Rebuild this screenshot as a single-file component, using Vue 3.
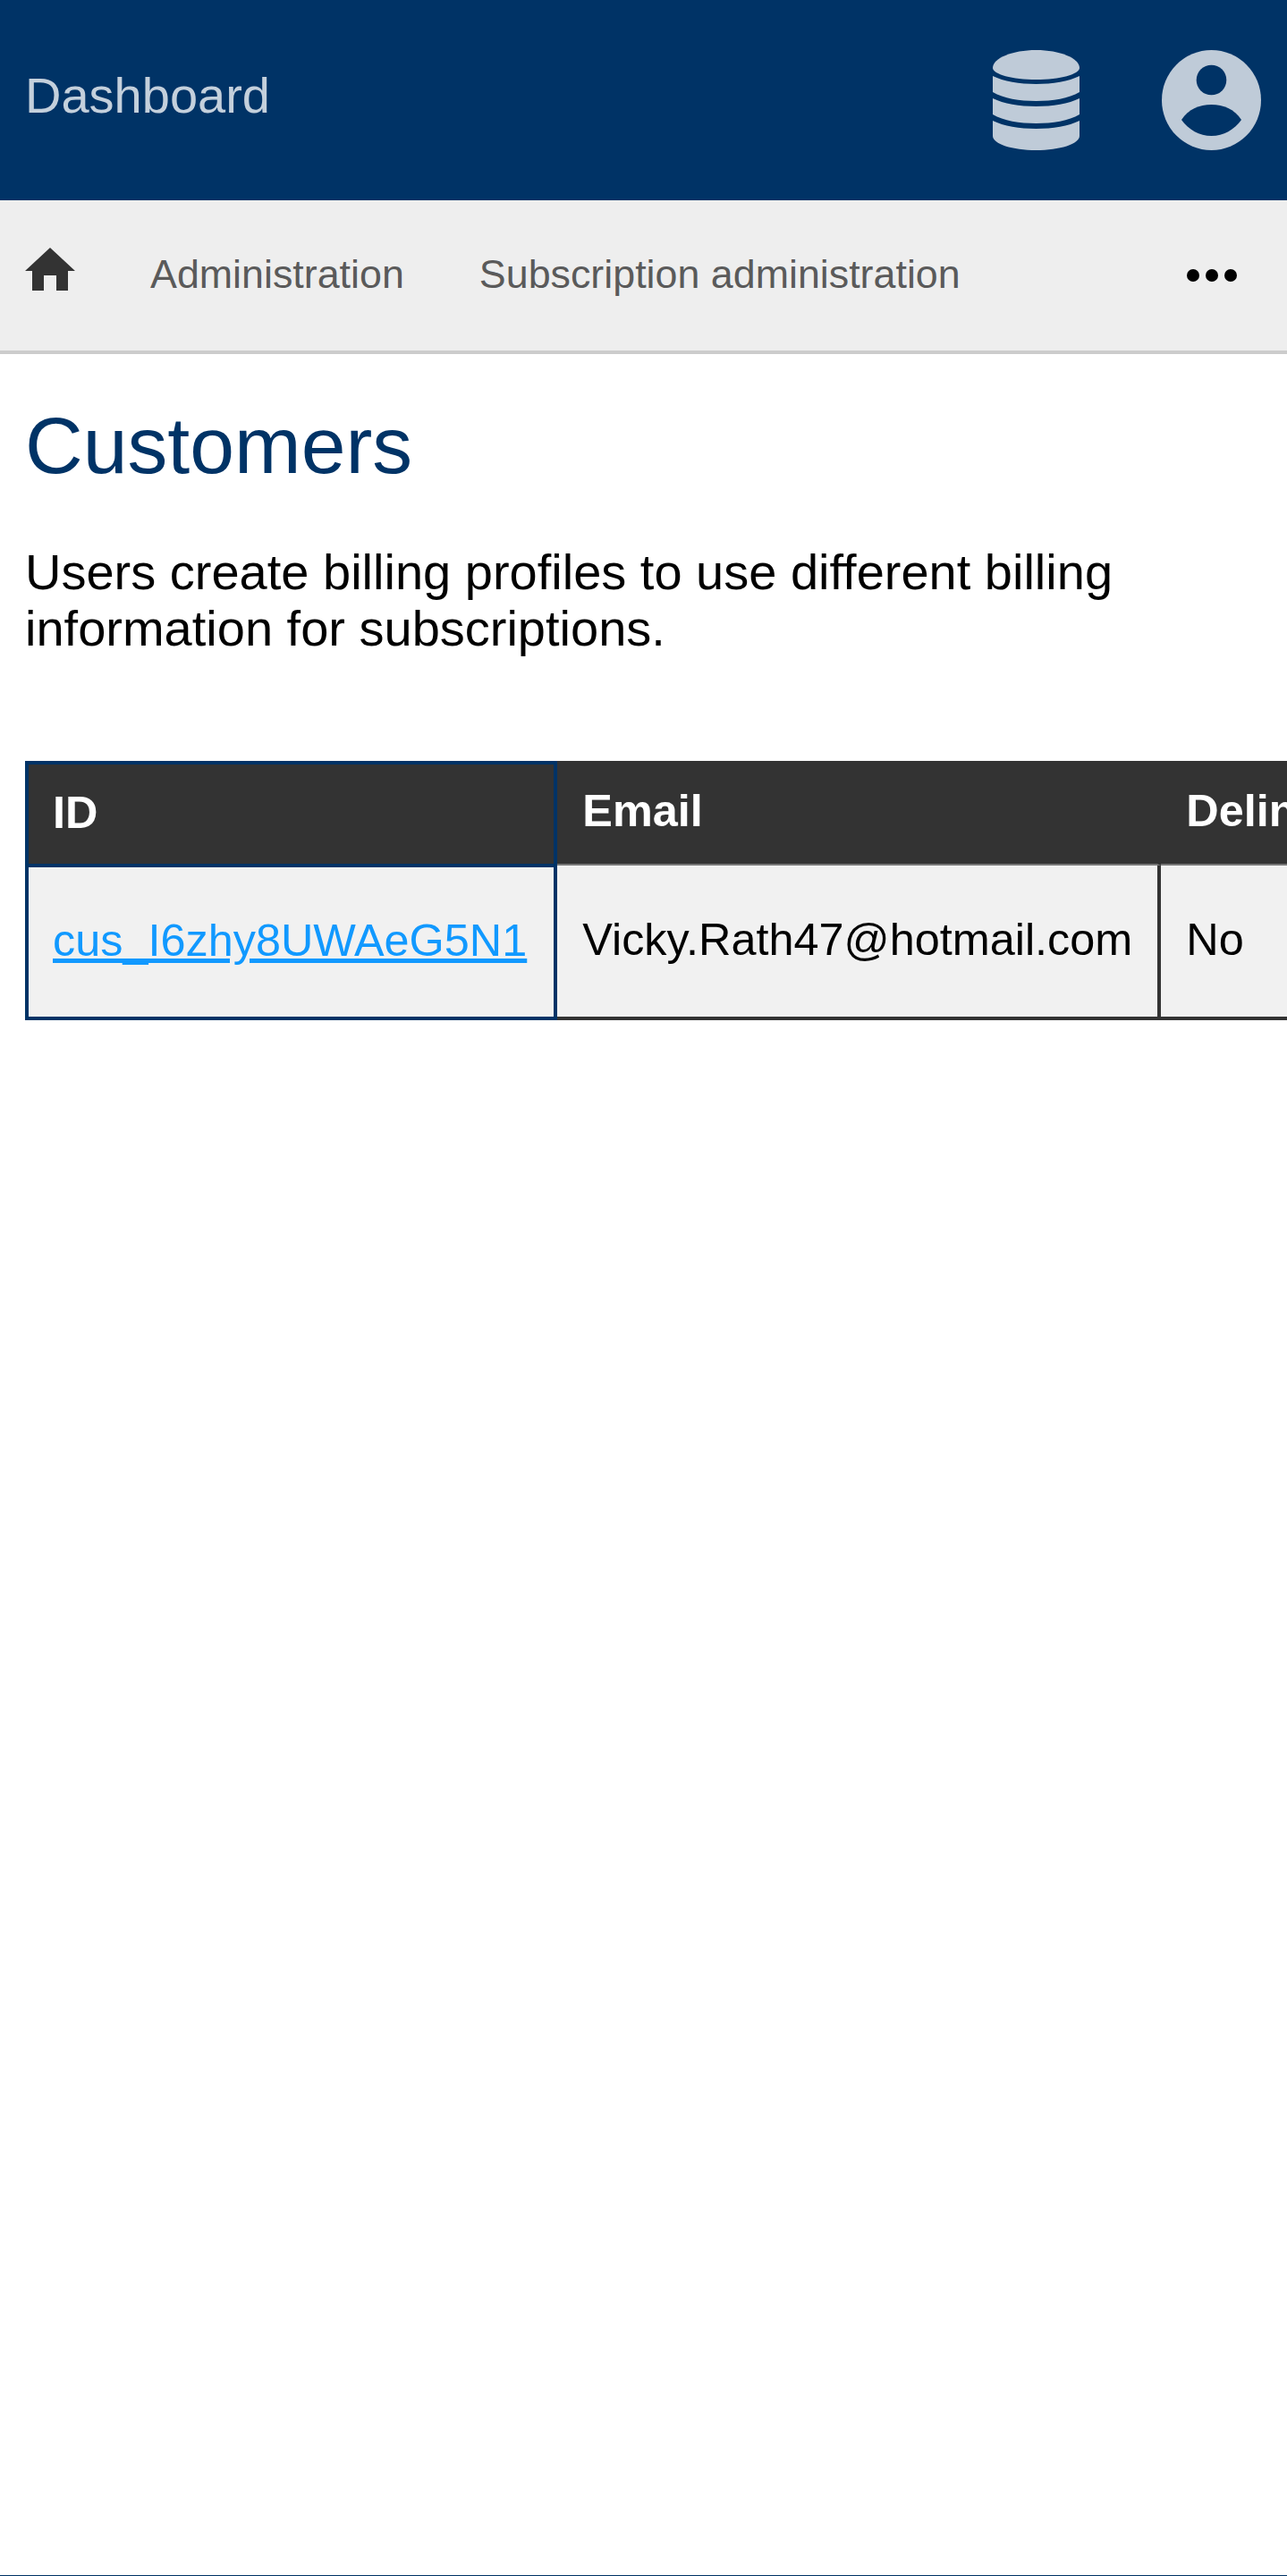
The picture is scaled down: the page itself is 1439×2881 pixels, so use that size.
<template>
  <div class="page">
    <header class="topbar">
      <a class="brand">Dashboard</a>
      <div class="top-icons">
        <svg class="db-icon" viewBox="0 0 97 112" fill="#bfcbd8">
          <path d="M0 20C0 9 22 0 48.500 0S97 9 97 20C97 27 75 33 48.500 33S0 27 0 20Z" />
          <path d="M0 29C12 35 30 38 48.500 38S85 35 97 29V47C85 54 67 57 48.500 57S12 54 0 47Z" />
          <path d="M0 54C12 60 30 63 48.500 63S85 60 97 54V72C85 79 67 82 48.500 82S12 79 0 72Z" />
          <path d="M0 79C12 85 30 88 48.500 88S85 85 97 79V96C97 105 75 112 48.500 112S0 105 0 96Z" />
        </svg>
        <svg class="user-icon" viewBox="0 0 111 112">
          <ellipse cx="55.500" cy="56" rx="55.500" ry="56" fill="#bfcbd8" />
          <circle cx="55.500" cy="33.500" r="16.800" fill="#003366" />
          <path d="M22 78C30 66 42 61 55.500 61S81 66 89 78C81 89 69 96 55.500 96S30 89 22 78Z" fill="#003366" />
        </svg>
      </div>
    </header>

    <nav class="subnav">
      <a class="home">
        <svg viewBox="0 0 56 48" width="56" height="48" fill="#333">
          <path d="M28 0L56 26H48V48H35V31H21V48H8V26H0Z" />
        </svg>
      </a>
      <a class="nav-link">Administration</a>
      <a class="nav-link">Subscription administration</a>
      <div class="dots">
        <span v-for="n in 3" :key="n"></span>
      </div>
    </nav>

    <main class="content">
      <h1>Customers</h1>
      <p class="intro">Users create billing profiles to use different billing information for subscriptions.</p>

      <div class="table-wrap">
        <table>
          <thead>
            <tr>
              <th v-for="col in columns" :key="col" :class="{ first: col === 'ID' }">{{ col }}</th>
            </tr>
          </thead>
          <tbody>
            <tr v-for="row in rows" :key="row.id">
              <td class="first"><a href="#">{{ row.id }}</a></td>
              <td>{{ row.email }}</td>
              <td>{{ row.delinquent }}</td>
            </tr>
          </tbody>
        </table>
      </div>
    </main>
  </div>
</template>

<script setup>
const columns = ['ID', 'Email', 'Delinquent']

const rows = [
  { id: 'cus_I6zhy8UWAeG5N1', email: 'Vicky.Rath47@hotmail.com', delinquent: 'No' }
]
</script>

<style>
body {
  margin: 0;
}
</style>

<style scoped>
.page {
  width: 1439px;
  height: 2881px;
  box-sizing: border-box;
  border-bottom: 1px solid #003366;
  font-family: "Liberation Sans", Arial, sans-serif;
  color: #000;
  background: #fff;
  overflow: hidden;
}

.topbar {
  height: 224px;
  background: #003366;
  display: flex;
  align-items: center;
  justify-content: space-between;
  padding: 0 29px 0 28px;
}

.brand {
  font-size: 56px;
  color: #c4d0dc;
  margin-bottom: 11px;
}

.top-icons {
  display: flex;
  align-items: center;
  gap: 92px;
}

.db-icon {
  width: 97px;
  height: 112px;
}

.user-icon {
  width: 111px;
  height: 112px;
}

.subnav {
  height: 168px;
  background: #eee;
  border-bottom: 4px solid #ccc;
  display: flex;
  align-items: center;
  padding: 0 28px;
}

.home {
  display: flex;
  margin-right: 84px;
  margin-bottom: 14px;
}

.nav-link {
  font-size: 44.800px;
  color: #5a5a5a;
  margin-right: 84px;
  margin-bottom: 3px;
}

.dots {
  margin-left: auto;
  margin-right: 28px;
  display: flex;
  gap: 7px;
}

.dots span {
  width: 14px;
  height: 14px;
  border-radius: 50%;
  background: #000;
}

.content {
  padding: 0 28px;
}

h1 {
  margin: 58px 0 64px;
  font-size: 89.600px;
  font-weight: 400;
  line-height: 1;
  color: #003366;
}

.intro {
  margin: 0 0 117px;
  font-size: 56px;
  line-height: 63px;
  max-width: 1300px;
}

.table-wrap {
  margin-right: -28px;
  overflow: hidden;
}

table {
  border-collapse: separate;
  border-spacing: 0;
  font-size: 50.400px;
}

th,
td {
  box-sizing: border-box;
  padding: 0 28px 3px;
  text-align: left;
  white-space: nowrap;
  border-right: 4px solid #333;
}

th {
  height: 117px;
  background: #333;
  color: #fff;
  font-weight: 700;
  border-bottom: 2px solid #777;
}

td {
  height: 173px;
  background: #f1f1f1;
  border-bottom: 4px solid #333;
}

th.first {
  border: 4px solid #003366;
  border-bottom-width: 2px;
}

td.first {
  border: 4px solid #003366;
  border-top-width: 2px;
}

th.first,
td.first {
  padding-left: 27px;
  padding-right: 30px;
}

td a {
  color: #1199ff;
}
</style>
